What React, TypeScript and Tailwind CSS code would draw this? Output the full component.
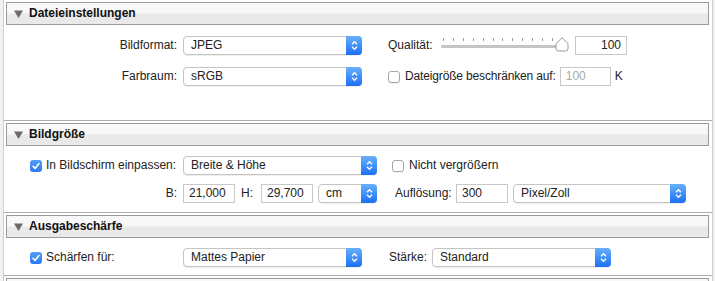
import React from "react";

const font = { fontFamily: '"Liberation Sans", Arial, sans-serif' };

function Triangle() {
  return (
    <svg width="9" height="8" viewBox="0 0 9 8" className="shrink-0">
      <path d="M0 0.5 H9 L4.5 8 Z" fill="#6b6b6b" />
    </svg>
  );
}

function Chevrons() {
  return (
    <svg width="7" height="11" viewBox="0 0 7 11">
      <path d="M1 4.2 L3.5 1.7 L6 4.2" stroke="white" strokeWidth="1.3" fill="none" />
      <path d="M1 6.8 L3.5 9.3 L6 6.8" stroke="white" strokeWidth="1.3" fill="none" />
    </svg>
  );
}

function Select({ value, w }: { value: string; w: string }) {
  return (
    <div
      className={`flex h-[19px] shrink-0 items-center rounded-[4px] border border-[#c4c4c4] bg-white shadow-[0_1px_1px_rgba(0,0,0,0.07)] ${w}`}
    >
      <span className="flex-1 truncate pl-[7px] text-[#222]">{value}</span>
      <span className="-my-px -mr-px flex h-[19px] w-[16px] items-center justify-center rounded-r-[4px] bg-gradient-to-b from-[#67b0fa] to-[#1d6ff4]">
        <Chevrons />
      </span>
    </div>
  );
}

function NumInput({
  value,
  w,
  right,
  muted,
}: {
  value: string;
  w: string;
  right?: boolean;
  muted?: boolean;
}) {
  return (
    <div
      className={`flex h-[19px] shrink-0 items-center border border-[#c8c8c8] bg-white px-[5px] ${w} ${
        right ? "justify-end" : ""
      } ${muted ? "text-[#a8a8a8]" : "text-[#222]"}`}
    >
      {value}
    </div>
  );
}

function Checkbox({ checked }: { checked?: boolean }) {
  if (checked) {
    return (
      <span className="flex h-[12px] w-[12px] shrink-0 items-center justify-center rounded-[3px] bg-gradient-to-b from-[#529ef9] to-[#2a77f5]">
        <svg width="10" height="10" viewBox="0 0 10 10">
          <path d="M2 5.3 L4.1 7.4 L8 2.6" stroke="white" strokeWidth="1.6" fill="none" strokeLinecap="round" strokeLinejoin="round" />
        </svg>
      </span>
    );
  }
  return (
    <span className="h-[12px] w-[12px] shrink-0 rounded-[3px] border border-[#a6a6a6] bg-white shadow-[0_1px_0_rgba(0,0,0,0.05)]" />
  );
}

function Slider() {
  const ticks = Array.from({ length: 13 }, (_, i) => i);
  return (
    <div className="relative ml-[9px] h-[19px] w-[128px] shrink-0">
      <div className="absolute left-[2px] right-[6px] top-[2px] flex justify-between">
        {ticks.map((t) => (
          <span key={t} className="h-[3px] w-px bg-[#9b9b9b]" />
        ))}
      </div>
      <div className="absolute left-0 right-[6px] top-[9px] h-[3px] rounded-full bg-[#c6c6c6]" />
      <svg
        width="14"
        height="15"
        viewBox="0 0 14 15"
        className="absolute right-0 top-[1px]"
      >
        <path
          d="M7 0.8 L13 6.5 V11.5 Q13 14 10.5 14 H3.5 Q1 14 1 11.5 V6.5 Z"
          fill="white"
          stroke="#8f8f8f"
          strokeWidth="0.9"
        />
      </svg>
    </div>
  );
}

function Section({
  title,
  children,
  body,
}: {
  title?: string;
  children?: React.ReactNode;
  body?: string;
}) {
  return (
    <div className="border-b border-[#adadad] pl-[2px] pr-[3px] pt-[2px]">
      <div className="flex h-[23px] items-center border border-[#9b9b9b] bg-gradient-to-b from-[#f8f8f8] from-45% to-[#e9e9e9] to-55% pl-[7px]">
        <Triangle />
        {title && (
          <span className="ml-[6px] text-[12px] font-bold text-[#111]">{title}</span>
        )}
      </div>
      {children && <div className={body}>{children}</div>}
    </div>
  );
}

export default function App() {
  return (
    <div className="h-[281px] overflow-hidden whitespace-nowrap bg-[#f1f1f1] text-[12px] leading-[19px] text-[#222]" style={font}>
      <div className="ml-[3px] w-[710px] border-x border-[#cfcfcf] bg-white">
        <Section title="Dateieinstellungen" body="flex flex-col gap-[12px] pb-[34px] pt-[11px]">
          <div className="flex h-[19px] items-center">
            <span className="w-[171px] shrink-0 text-right">Bildformat:</span>
            <span className="ml-[6px]">
              <Select value="JPEG" w="w-[179px]" />
            </span>
            <span className="ml-[26px] w-[44px] shrink-0">Qualität:</span>
            <Slider />
            <span className="ml-[6px]">
              <NumInput value="100" w="w-[52px]" right />
            </span>
          </div>
          <div className="flex h-[19px] items-center">
            <span className="w-[171px] shrink-0 text-right">Farbraum:</span>
            <span className="ml-[6px]">
              <Select value="sRGB" w="w-[179px]" />
            </span>
            <span className="ml-[26px] flex items-center">
              <Checkbox />
              <span className="ml-[5px] tracking-[-0.15px]">Dateigröße beschränken auf:</span>
            </span>
            <span className="ml-[4px]">
              <NumInput value="100" w="w-[51px]" muted />
            </span>
            <span className="ml-[4px]">K</span>
          </div>
        </Section>

        <Section title="Bildgröße" body="flex flex-col gap-[9px] pb-[9px] pt-[10px]">
          <div className="flex h-[19px] items-center">
            <span className="flex w-[171px] shrink-0 items-center pl-[24px]">
              <Checkbox checked />
              <span className="ml-[4px]">In Bildschirm einpassen:</span>
            </span>
            <span className="ml-[6px]">
              <Select value="Breite & Höhe" w="w-[194px]" />
            </span>
            <span className="ml-[15px] flex items-center">
              <Checkbox />
              <span className="ml-[5px]">Nicht vergrößern</span>
            </span>
          </div>
          <div className="flex h-[19px] items-center">
            <span className="w-[171px] shrink-0 text-right">B:</span>
            <span className="ml-[6px]">
              <NumInput value="21,000" w="w-[52px]" />
            </span>
            <span className="ml-[6px] w-[14px] shrink-0">H:</span>
            <span className="ml-[6px]">
              <NumInput value="29,700" w="w-[52px]" />
            </span>
            <span className="ml-[5px]">
              <Select value="cm" w="w-[59px]" />
            </span>
            <span className="ml-[18px] w-[56px] shrink-0">Auflösung:</span>
            <span className="ml-[5px]">
              <NumInput value="300" w="w-[52px]" />
            </span>
            <span className="ml-[5px]">
              <Select value="Pixel/Zoll" w="w-[173px]" />
            </span>
          </div>
        </Section>

        <Section title="Ausgabeschärfe" body="flex flex-col pb-[8px] pt-[10px]">
          <div className="flex h-[19px] items-center">
            <span className="flex w-[171px] shrink-0 items-center pl-[24px]">
              <Checkbox checked />
              <span className="ml-[4px]">Schärfen für:</span>
            </span>
            <span className="ml-[6px]">
              <Select value="Mattes Papier" w="w-[179px]" />
            </span>
            <span className="ml-[27px] w-[38px] shrink-0">Stärke:</span>
            <span className="ml-[5px]">
              <Select value="Standard" w="w-[179px]" />
            </span>
          </div>
        </Section>

        <Section />
      </div>
    </div>
  );
}
